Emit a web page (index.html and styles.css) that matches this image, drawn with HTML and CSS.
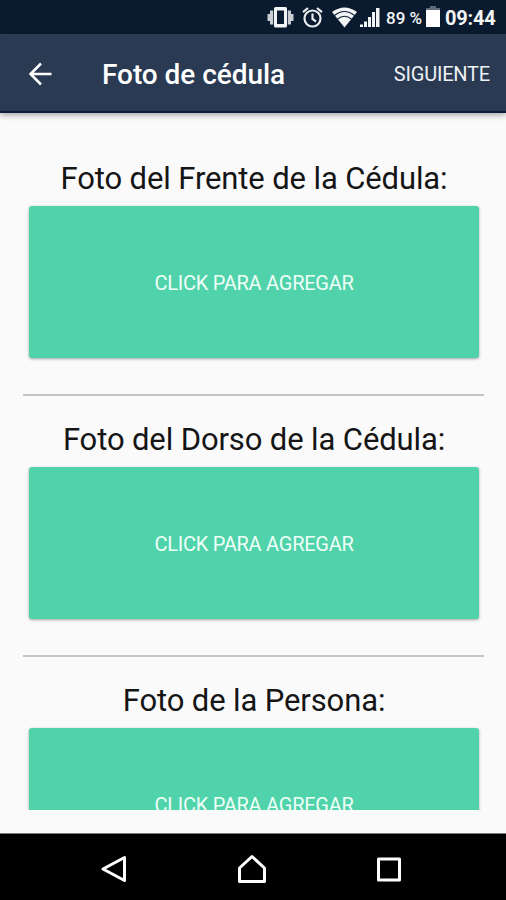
FILE: index.html
```html
<!DOCTYPE html>
<html lang="es">
<head>
<meta charset="utf-8">
<title>Foto de cédula</title>
<link rel="stylesheet" href="styles.css">
</head>
<body>
<div class="status">
  <svg class="status-icons" width="114" height="34" viewBox="0 0 114 34" fill="#f2f4f5">
    <path fill-rule="evenodd" d="M9.500 7H19.500Q21 7 21 8.500V26Q21 27.500 19.500 27.500H9.500Q8 27.500 8 26V8.500Q8 7 9.500 7ZM11 10.500V24H18V10.500Z"/>
    <path d="M4 10.500H7.200V24.500H4ZM21.800 10.500H25V24.500H21.800ZM1.500 14H4V21H1.500ZM25 14H27.500V21H25Z" fill="#c9ced3"/>
    <g fill="none" stroke="#e8ebed" stroke-width="2.200">
      <circle cx="46.500" cy="18.500" r="8"/>
      <path d="M46.500 13.500V19L50 21.500M37 12.200L42 8M56 12.200L51 8"/>
    </g>
    <path d="M66 12Q78.500 3 91 12L78.500 27.500Z"/>
    <path d="M68.500 15.500Q78.500 7.500 88.500 15.500M71.500 19Q78.500 13.500 85.500 19" fill="none" stroke="#0c1c30" stroke-width="1.100"/>
    <path d="M94 24.500H97V27H94ZM98 21.500H101V27H98ZM102 17H105V27H102ZM106 12H109V27H106ZM110 8H113.500V27H110Z"/>
  </svg>
  <span class="percent">89 %</span>
  <svg class="battery" width="14" height="22" viewBox="0 0 14 22"><path fill="#5f6b78" d="M4 0H10V2H14V5H0V2H4Z"/><path fill="#fff" d="M0 4H14V21H0Z"/></svg>
  <span class="time">09:44</span>
</div>
<header class="appbar">
  <svg class="back" width="24" height="24" viewBox="0 0 24 24" fill="none" stroke="#fff" stroke-width="2.500"><path d="M23.500 12H3M13 1.500L2.500 12L13 22.500"/></svg>
  <h1 class="title">Foto de cédula</h1>
  <span class="next">SIGUIENTE</span>
</header>
<main class="content">
  <section class="photo">
    <h2 class="label">Foto del Frente de la Cédula:</h2>
    <button class="add">CLICK PARA AGREGAR</button>
  </section>
  <section class="photo">
    <h2 class="label">Foto del Dorso de la Cédula:</h2>
    <button class="add">CLICK PARA AGREGAR</button>
  </section>
  <section class="photo">
    <h2 class="label">Foto de la Persona:</h2>
    <button class="add">CLICK PARA AGREGAR</button>
  </section>
</main>
<nav class="navbar">
  <svg width="28" height="30" viewBox="0 0 28 30"><path d="M24.500 3.500V26.500L3 15Z"/></svg>
  <svg width="30" height="30" viewBox="0 0 30 30"><path d="M15 2.500L27.500 14V27.500H2.500V14Z"/></svg>
  <svg width="26" height="30" viewBox="0 0 26 30"><path d="M2.500 5H23.500V26H2.500Z"/></svg>
</nav>
</body>
</html>
```

FILE: styles.css
```css
* { box-sizing: border-box; }
body {
  margin: 0;
  height: 900px;
  display: flex;
  flex-direction: column;
  overflow: hidden;
  background: #fafafa;
  font-family: Roboto, sans-serif;
}
.status {
  height: 34px;
  flex: none;
  display: flex;
  align-items: center;
  padding-left: 266px;
  background: #0b1b2f;
  color: #f2f4f5;
  white-space: nowrap;
}
.status-icons { flex: none; }
.percent {
  width: 39px;
  margin-left: 6px;
  padding-top: 2px;
  font-size: 17px;
  font-weight: 500;
  line-height: 34px;
}
.battery { flex: none; margin-left: 1px; }
.time {
  margin-left: 5px;
  padding-top: 2px;
  font-size: 20px;
  font-weight: 700;
  line-height: 34px;
  letter-spacing: -0.2px;
}
.appbar {
  position: relative;
  height: 79px;
  flex: none;
  display: flex;
  align-items: center;
  padding: 2px 16px 0 28px;
  background: #293a52;
  border-bottom: 2px solid #0d1c3e;
  box-shadow: 0 2px 6px rgba(0, 0, 0, .35);
  color: #fff;
}
.title { margin: 0 0 0 50px; padding-top: 2px; font-size: 28px; font-weight: 500; letter-spacing: -0.05px; }
.next { margin-left: auto; padding-top: 1px; font-size: 20px; letter-spacing: -0.2px; color: #eef1f5; }
.content {
  height: 697px;
  flex: none;
  padding: 44px 22px 0 23px;
  overflow: hidden;
}
.photo { position: relative; height: 261px; padding: 0 5.5px; }
.photo + .photo::before {
  content: "";
  position: absolute;
  top: -24px;
  left: 0;
  right: 0;
  height: 2px;
  background: #c4c4c4;
}
.label {
  height: 49px;
  margin: 0;
  padding-left: 1px;
  font-size: 31px;
  font-weight: 400;
  line-height: 44px;
  letter-spacing: -0.12px;
  text-align: center;
  color: #151515;
  white-space: nowrap;
}
.add {
  display: block;
  width: 100%;
  height: 152px;
  padding: 2px 0 0 1px;
  border: 0;
  border-radius: 3px;
  background: #50d3aa;
  box-shadow: 0 1px 3px rgba(0, 0, 0, .35);
  color: #effff8;
  font: 400 20px Roboto, sans-serif;
  letter-spacing: -0.25px;
}
.navbar {
  height: 67px;
  flex: none;
  display: flex;
  align-items: center;
  justify-content: space-between;
  margin-top: auto;
  padding: 4px 104px 0 100px;
  background: #000;
  border-top: 1px solid #777;
}
.navbar path { fill: none; stroke: #fff; stroke-width: 3; stroke-linejoin: round; }
```
